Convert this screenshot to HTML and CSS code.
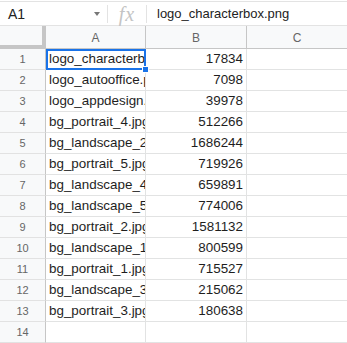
FILE: index.html
```html
<!DOCTYPE html>
<html>
<head>
<meta charset="utf-8">
<link rel="stylesheet" href="styles.css">
</head>
<body>
<div class="fbar">
  <div class="namebox"><span class="ref">A1</span><span class="caret"></span></div>
  <div class="sep"></div>
  <div class="fx">fx</div>
  <div class="sep"></div>
  <div class="formula">logo_characterbox.png</div>
</div>
<div class="sheet">
  <div class="corner"></div><div class="ch">A</div><div class="ch">B</div><div class="ch last">C</div>

  <div class="rh">1</div><div class="c t sel"><span class="clip">logo_characterbox.png</span><span class="handle"></span></div><div class="c n">17834</div><div class="c e"></div>
  <div class="rh">2</div><div class="c t">logo_autooffice.png</div><div class="c n">7098</div><div class="c e"></div>
  <div class="rh">3</div><div class="c t">logo_appdesign.png</div><div class="c n">39978</div><div class="c e"></div>
  <div class="rh">4</div><div class="c t">bg_portrait_4.jpg</div><div class="c n">512266</div><div class="c e"></div>
  <div class="rh">5</div><div class="c t">bg_landscape_2.jpg</div><div class="c n">1686244</div><div class="c e"></div>
  <div class="rh">6</div><div class="c t">bg_portrait_5.jpg</div><div class="c n">719926</div><div class="c e"></div>
  <div class="rh">7</div><div class="c t">bg_landscape_4.jpg</div><div class="c n">659891</div><div class="c e"></div>
  <div class="rh">8</div><div class="c t">bg_landscape_5.jpg</div><div class="c n">774006</div><div class="c e"></div>
  <div class="rh">9</div><div class="c t">bg_portrait_2.jpg</div><div class="c n">1581132</div><div class="c e"></div>
  <div class="rh">10</div><div class="c t">bg_landscape_1.jpg</div><div class="c n">800599</div><div class="c e"></div>
  <div class="rh">11</div><div class="c t">bg_portrait_1.jpg</div><div class="c n">715527</div><div class="c e"></div>
  <div class="rh">12</div><div class="c t">bg_landscape_3.jpg</div><div class="c n">215062</div><div class="c e"></div>
  <div class="rh">13</div><div class="c t">bg_portrait_3.jpg</div><div class="c n">180638</div><div class="c e"></div>
  <div class="rh">14</div><div class="c t"></div><div class="c n"></div><div class="c e"></div>
</div>
</body>
</html>
```
FILE: styles.css
```css
* { box-sizing: border-box; }
html, body { margin: 0; padding: 0; background: #fff; }
body {
  width: 347px;
  height: 343px;
  overflow: hidden;
  font-family: "Liberation Sans", Arial, sans-serif;
}
.fbar {
  height: 25px;
  display: flex;
  align-items: center;
  border-top: 1px solid #e3e3e3;
  border-bottom: 1px solid #e3e3e3;
  margin-top: 1px;
}
.namebox {
  width: 107px;
  display: flex;
  align-items: center;
  padding-left: 8px;
  padding-right: 7px;
}
.ref { font-size: 14px; color: #222; flex: 1; }
.caret {
  width: 0; height: 0;
  border-left: 3px solid transparent;
  border-right: 3px solid transparent;
  border-top: 4px solid #777;
}
.sep { width: 1px; height: 18px; background: #e3e3e3; }
.fx {
  width: 38px;
  text-align: center;
  font-family: "Liberation Serif", "DejaVu Serif", serif;
  font-style: italic;
  font-size: 20px;
  color: #c4c4c4;
  line-height: 22px;
  letter-spacing: 1px;
}
.formula {
  padding-left: 10px;
  font-size: 13px;
  color: #222;
}
.sheet {
  display: grid;
  grid-template-columns: 46px 100px 101px 1fr;
  grid-template-rows: 23px repeat(14, 21px);
}
.corner {
  background: #f8f9fa;
  border-right: 4px solid #c6c6c6;
  border-bottom: 4px solid #c6c6c6;
}
.ch {
  background: #f8f9fa;
  border-right: 1px solid #c6c6c6;
  border-bottom: 1px solid #c6c6c6;
  font-size: 12px;
  color: #666;
  display: flex;
  align-items: center;
  justify-content: center;
  padding-top: 1px;
}
.ch.last { border-right: none; }
.rh {
  background: #f8f9fa;
  border-right: 1px solid #c6c6c6;
  border-bottom: 1px solid #e2e2e2;
  font-size: 11px;
  color: #666;
  display: flex;
  align-items: center;
  justify-content: center;
}
.c {
  border-right: 1px solid #e2e3e3;
  border-bottom: 1px solid #e2e3e3;
  font-size: 13.4px;
  color: #1e1e1e;
  white-space: nowrap;
  overflow: hidden;
  padding: 0 3px;
  line-height: 20px;
}
.c.e { border-right: none; }
.c.n { text-align: right; }
.sel {
  position: relative;
  overflow: visible;
  outline: 2px solid #1a73e8;
  outline-offset: -2px;
  z-index: 2;
}
.clip {
  display: block;
  overflow: hidden;
  width: 96px;
}
.handle {
  position: absolute;
  right: -4px;
  bottom: -4px;
  width: 7px;
  height: 7px;
  background: #1a73e8;
  border: 1px solid #fff;
}
```
